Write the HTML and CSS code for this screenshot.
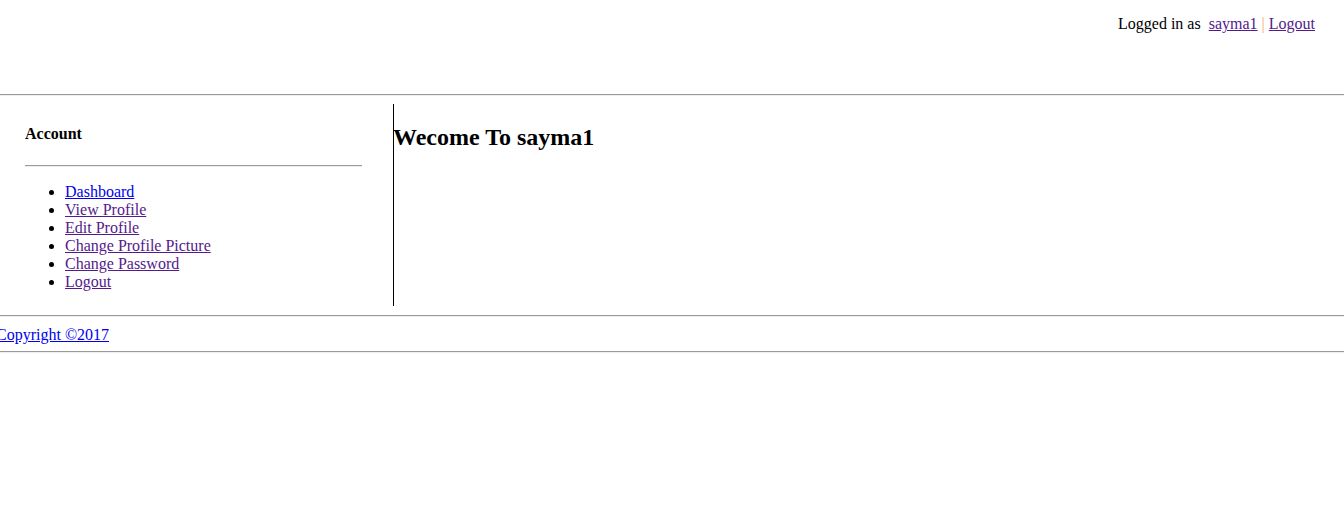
FILE: index.html
```html
<!DOCTYPE html>
<html>
<head>
<meta charset="utf-8">
<title>Dashboard</title>
<link rel="stylesheet" href="styles.css">
</head>
<body>
<div class="header">
  <span class="login">Logged in as&nbsp; <a class="link visited" href="#">sayma1</a> <span class="sep">|</span> <a class="link visited" href="#">Logout</a></span>
</div>
<hr class="rule">
<div class="main">
  <div class="sidebar">
    <h4 class="side-title">Account</h4>
    <hr class="side-rule">
    <ul class="menu">
      <li><a class="link" href="#">Dashboard</a></li>
      <li><a class="link visited" href="#">View Profile</a></li>
      <li><a class="link visited" href="#">Edit Profile</a></li>
      <li><a class="link visited" href="#">Change Profile Picture</a></li>
      <li><a class="link visited" href="#">Change Password</a></li>
      <li><a class="link visited" href="#">Logout</a></li>
    </ul>
  </div>
  <div class="content">
    <h2 class="welcome">Wecome To sayma1</h2>
  </div>
</div>
<hr class="rule">
<div class="footer"><a class="link" href="#">Copyright ©2017</a></div>
<hr class="rule">
</body>
</html>
```
FILE: styles.css
```css
html, body {
  margin: 0;
  padding: 0;
  background: #fff;
}
body {
  font-family: "Liberation Serif", "Times New Roman", serif;
  font-size: 16px;
  color: #000;
}
.header {
  height: 94px;
  box-sizing: border-box;
  padding-top: 15px;
  padding-right: 29px;
  text-align: right;
}
.link {
  color: #0000ee;
  text-decoration: underline;
}
.link.visited {
  color: #551a8b;
}
.sep {
  color: #f0b060;
}
.rule {
  margin: 0;
  border: 0;
  border-top: 1px solid #9a9a9a;
  border-bottom: 1px solid #eeeeee;
  height: 0;
}
.main {
  display: flex;
  margin: 8px 0 9px;
}
.sidebar {
  width: 394px;
  box-sizing: border-box;
  padding: 0 31px 0 25px;
  border-right: 1px solid #000;
  flex: none;
}
.side-title {
  font-size: 16px;
  font-weight: bold;
  margin: 21px 0 22px;
}
.side-rule {
  margin: 0;
  border: 0;
  border-top: 1px solid #9a9a9a;
  border-bottom: 1px solid #eeeeee;
  height: 0;
}
.menu {
  margin: 16px 0 15px;
  padding-left: 40px;
}
.content {
  flex: 1;
}
.welcome {
  font-size: 24px;
  font-weight: bold;
  margin: 20px 0 20px -1px;
}
.footer {
  padding: 9px 0 7px;
  line-height: 18px;
  text-indent: -4px;
  white-space: nowrap;
}
```
